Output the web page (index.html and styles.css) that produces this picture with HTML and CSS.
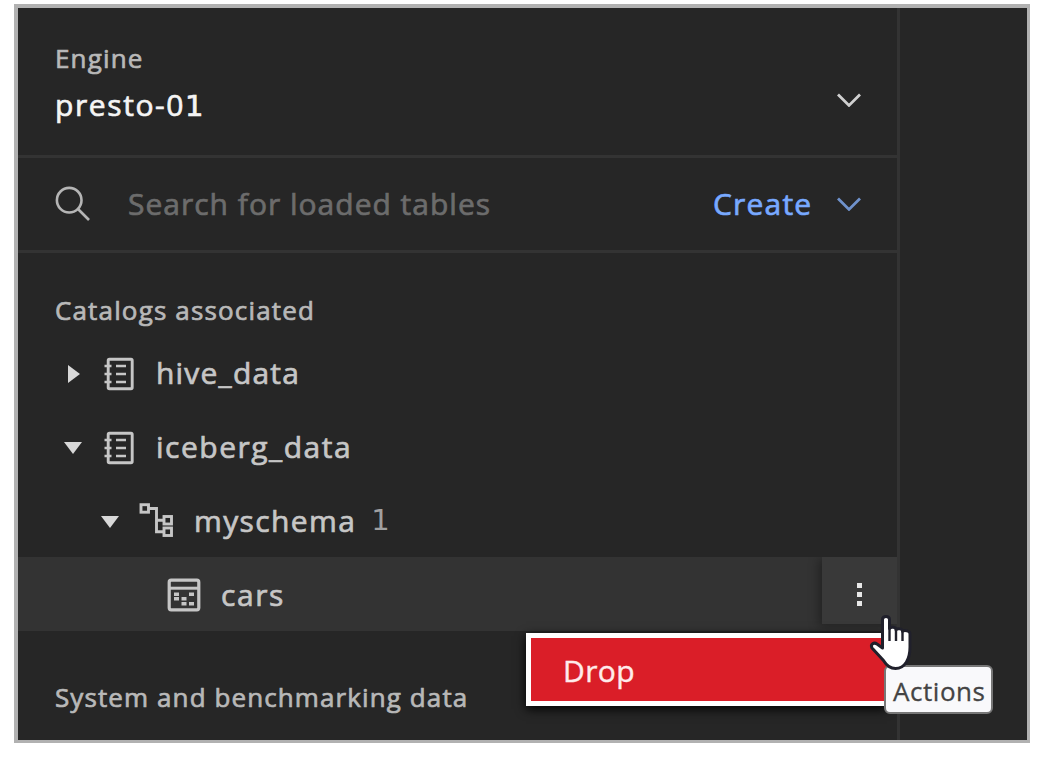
FILE: index.html
```html
<!DOCTYPE html>
<html lang="en">
<head>
<meta charset="utf-8">
<title>Data manager</title>
<link rel="stylesheet" href="styles.css">
</head>
<body>
<svg class="defs" aria-hidden="true">
  <symbol id="catalog" viewBox="0 0 32 36">
    <rect x="5.2" y="3.2" width="24" height="29.600" rx="1.2" fill="none" stroke="currentColor" stroke-width="2.9"/>
    <path d="M1.500 10h7M1.500 18h7M1.500 26h7M13 10h10M13 18h10M13 26h10" fill="none" stroke="currentColor" stroke-width="2.7"/>
  </symbol>
  <symbol id="chevron" viewBox="0 0 24 14">
    <path d="M1 1.5 12 12.4 23 1.5" fill="none" stroke="currentColor" stroke-width="2.8"/>
  </symbol>
</svg>
<main class="frame">
  <aside class="sidebar">
    <header class="engine">
      <div>
        <div class="caption"><span class="t-engine">Engine</span></div>
        <div class="engine-name"><span class="t-presto">presto-0<span class="one">1</span></span></div>
      </div>
      <svg class="chevron"><use href="#chevron"/></svg>
    </header>
    <div class="search">
      <svg class="search-icon" viewBox="0 0 36 36"><circle cx="14.2" cy="14.2" r="12.3"/><path d="M23 23 34 34"/></svg>
      <span class="placeholder">Search for loaded tables</span>
      <span class="create">Create</span>
      <svg class="chevron blue"><use href="#chevron"/></svg>
    </div>
    <h2 class="caption catalogs"><span class="t-catalogs">Catalogs associated</span></h2>
    <ul class="tree">
      <li class="row"><i class="caret right"></i><svg class="catalog"><use href="#catalog"/></svg><span class="t-hive">hive_data</span></li>
      <li class="row"><i class="caret down"></i><svg class="catalog"><use href="#catalog"/></svg><span class="t-iceberg">iceberg_data</span></li>
      <li class="row level2"><i class="caret down"></i>
        <svg class="schema" viewBox="0 0 36 36" fill="none" stroke="currentColor" stroke-width="2.9"><rect x="2" y="1.7" width="7.5" height="7.5"/><rect x="25" y="13.5" width="7.5" height="7.5"/><rect x="25" y="25" width="7.5" height="7.5"/><path d="M10 5.5h7.5v23.300H25M17.500 17.300H25"/></svg>
        <span class="t-schema">myschema</span><span class="count one">1</span></li>
      <li class="row level3 selected">
        <svg class="table" viewBox="0 0 34 34"><rect x="2.2" y="2.2" width="29.600" height="29.600" rx="2" fill="none" stroke="currentColor" stroke-width="3.200"/><path d="M2 10.200h30" stroke="currentColor" stroke-width="3"/><path fill="currentColor" d="M7 14.500h5v3.500H7zM7 19h5v3.500H7zM22 14.500h5v3.500h-5zM14.500 19h5v3.500h-5zM14.500 24h5v3.500h-5zM22 24h5v3.500h-5z"/></svg>
        <span class="t-cars">cars</span>
        <button class="overflow" aria-label="Actions"><i></i><i></i><i></i></button>
      </li>
    </ul>
    <h2 class="caption system"><span class="t-system">System and benchmarking data</span></h2>
  </aside>
  <div class="menu"><span class="t-drop">Drop</span></div>
  <div class="tooltip"><span class="t-actions">Actions</span></div>
  <svg class="pointer" viewBox="0 0 44 56"><path d="M12.500 3.500c0-4 7-4 7 0V12.500c1-2 6.500-1.500 6.500 1.200 1.500-1.700 6.500-1 6.500 1.500 2-1.300 7.500-.5 7.500 2.500V31c0 12-5 21.500-14.500 21.500-6 0-9-3-12-8L2 32c-2-4 2-6 5-4l5.500 4z"/><path class="folds" d="M19.500 12v13M26 13.500v11.500M32.500 15v10"/></svg>
</main>
</body>
</html>
```
FILE: styles.css
```css
* { box-sizing: border-box; }
body { margin: 0; padding: 4px 0 0 14px; background: #fff; font-family: "Open Sans", "Noto Sans", sans-serif; }
.defs { position: absolute; width: 0; height: 0; }
.frame { position: relative; width: 1016px; height: 739px; border: 4px solid #b1b1b1; border-width: 4px 3px 3px 4px; background: #262626; color: #c6c6c6; overflow: hidden; }
.sidebar { width: 882px; height: 100%; border-right: 3px solid #333; -webkit-text-stroke: .7px currentColor; }
.sidebar span { white-space: nowrap; }
.engine { height: 150px; padding: 32px 36px 0 37px; border-bottom: 3px solid #333; display: flex; justify-content: space-between; }
.caption { margin: 0; font-size: 26px; font-weight: 400; line-height: 36px; color: #b8b8b8; letter-spacing: 1.15px; }
.engine-name { margin-top: 9px; font-size: 30px; line-height: 40px; color: #f4f4f4; letter-spacing: 1.6px; }
.one { font-family: "DejaVu Sans", sans-serif; font-size: 29px; line-height: 1; }
.chevron { width: 24px; height: 14px; color: #d0d0d0; margin-top: 53px; flex: none; }
.search { height: 95px; padding: 0 36px 0 37px; border-bottom: 3px solid #333; display: flex; align-items: center; }
.search-icon { width: 36px; height: 36px; fill: none; stroke: #b5b5b5; stroke-width: 2.6; flex: none; }
.placeholder { margin-left: 37px; width: 585px; font-size: 30px; line-height: 40px; color: #6c6c6c; letter-spacing: 1px; }
.create { flex: 1; font-size: 30px; line-height: 40px; color: #78a9ff; letter-spacing: 1.2px; }
.chevron.blue { margin-top: 0; color: #6f92cc; }
.catalogs { padding: 39px 0 0 37px; height: 82px; }
.tree { list-style: none; margin: 0; padding: 0; }
.row { height: 74px; padding-left: 45px; display: flex; align-items: center; font-size: 30px; }
.row.level2 { padding-left: 82px; }
.row.level3 { padding-left: 149px; }
.caret { width: 20px; margin: 3px 20px 0 0; flex: none; display: flex; }
.caret::before { content: ""; margin: auto; border: solid transparent; }
.caret.right::before { border-width: 9px 0 9px 12px; border-left-color: #d8d8d8; margin-left: 5px; }
.caret.down::before { border-width: 12px 9px 0; border-top-color: #d8d8d8; }
.catalog { width: 32px; height: 36px; margin: 4px 21px 0 0; flex: none; }
.schema { width: 36px; height: 36px; margin: 2px 19px 0 0; flex: none; }
.row.level2 .caret { margin-right: 19px; }
.table { width: 34px; height: 34px; margin: 1px 20px 0 0; flex: none; }
.t-hive { letter-spacing: 1.2px; }
.t-iceberg { letter-spacing: 1.5px; }
.t-schema { letter-spacing: 1.4px; }
.t-cars { letter-spacing: 1.6px; }
.count { margin-left: 15px; color: #a0a0a0; -webkit-text-stroke: 0; }
.selected { background: #333; }
.overflow { margin: 0 0 7px auto; width: 75px; height: 67px; border: 0; padding: 7px 0 0; background: #393939; box-shadow: -3px 2px 10px rgba(0,0,0,.35); display: flex; flex-direction: column; align-items: center; justify-content: center; gap: 4px; clip-path: inset(0 0 -12px -16px); }
.overflow i { width: 5px; height: 5px; background: #e8e8e8; }
.system { padding: 48px 0 0 37px; letter-spacing: 1.1px; }
.menu { position: absolute; left: 508px; top: 625px; width: 361px; height: 73px; border: 5px solid #fff; border-right: 0; background: #da1e28; color: #ffeceb; font-size: 30px; line-height: 65px; padding-left: 32px; box-shadow: 0 3px 10px #000; -webkit-text-stroke: .4px currentColor; letter-spacing: .4px; }
.tooltip { position: absolute; left: 866px; top: 657px; width: 109px; height: 49px; border: 2px solid #777; border-radius: 6px; background: #f9f9fb; color: #444; font-size: 26px; line-height: 48px; padding-left: 7px; letter-spacing: .55px; -webkit-text-stroke: .3px currentColor; }
.pointer { position: absolute; left: 852px; top: 608px; width: 44px; height: 56px; overflow: visible; fill: #fff; stroke: #20202b; stroke-width: 3; stroke-linejoin: round; }
.folds { fill: none; stroke-width: 2.4; }
```
